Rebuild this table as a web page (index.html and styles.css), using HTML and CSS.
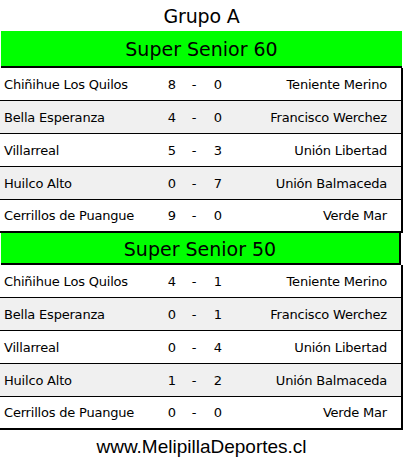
FILE: index.html
```html
<!DOCTYPE html>
<html lang="es">
<head>
<meta charset="utf-8">
<title>Grupo A</title>
<link rel="stylesheet" href="styles.css">
</head>
<body>
<div class="page">
  <h1 class="title">Grupo A</h1>

  <section class="group first">
    <h2 class="cat">Super Senior 60</h2>
    <div class="rows">
      <div class="row"><span class="home">Chiñihue Los Quilos</span><span class="s">8</span><span class="d">-</span><span class="s">0</span><span class="away">Teniente Merino</span></div>
      <div class="row alt"><span class="home">Bella Esperanza</span><span class="s">4</span><span class="d">-</span><span class="s">0</span><span class="away">Francisco Werchez</span></div>
      <div class="row"><span class="home">Villarreal</span><span class="s">5</span><span class="d">-</span><span class="s">3</span><span class="away">Unión Libertad</span></div>
      <div class="row alt"><span class="home">Huilco Alto</span><span class="s">0</span><span class="d">-</span><span class="s">7</span><span class="away">Unión Balmaceda</span></div>
      <div class="row last"><span class="home">Cerrillos de Puangue</span><span class="s">9</span><span class="d">-</span><span class="s">0</span><span class="away">Verde Mar</span></div>
    </div>
  </section>

  <section class="group second">
    <h2 class="cat">Super Senior 50</h2>
    <div class="rows">
      <div class="row"><span class="home">Chiñihue Los Quilos</span><span class="s">4</span><span class="d">-</span><span class="s">1</span><span class="away">Teniente Merino</span></div>
      <div class="row alt"><span class="home">Bella Esperanza</span><span class="s">0</span><span class="d">-</span><span class="s">1</span><span class="away">Francisco Werchez</span></div>
      <div class="row"><span class="home">Villarreal</span><span class="s">0</span><span class="d">-</span><span class="s">4</span><span class="away">Unión Libertad</span></div>
      <div class="row alt"><span class="home">Huilco Alto</span><span class="s">1</span><span class="d">-</span><span class="s">2</span><span class="away">Unión Balmaceda</span></div>
      <div class="row last"><span class="home">Cerrillos de Puangue</span><span class="s">0</span><span class="d">-</span><span class="s">0</span><span class="away">Verde Mar</span></div>
    </div>
  </section>

  <p class="site">www.MelipillaDeportes.cl</p>
</div>
</body>
</html>
```

FILE: styles.css
```css
html, body {
  margin: 0;
  padding: 0;
  background: #ffffff;
}

.page {
  width: 403px;
  font-family: "DejaVu Sans", Verdana, sans-serif;
  color: #000;
}

.title {
  margin: 0;
  height: 31px;
  display: flex;
  align-items: center;
  justify-content: center;
  font-size: 19px;
  letter-spacing: -0.2px;
  font-weight: normal;
  padding-top: 1px;
  box-sizing: border-box;
}

.cat {
  margin: 0 0 0 1px;
  background: #00ff00;
  font-size: 19px;
  font-weight: normal;
  display: flex;
  align-items: center;
  justify-content: center;
  border-bottom: 2px solid #000;
}

.first .cat {
  height: 37px;
  width: 401px;
  box-sizing: border-box;
  padding-top: 1px;
}

.second .cat {
  height: 32px;
  width: 400px;
  box-sizing: border-box;
  border-right: 2px solid #000;
  padding-top: 1px;
}

.rows {
  width: 403px;
  box-sizing: border-box;
  border-right: 2px solid #000;
}

.row {
  display: grid;
  grid-template-columns: 160px 24px 20px 28px 1fr;
  align-items: center;
  height: 33px;
  box-sizing: border-box;
  border-bottom: 1px solid #000;
  font-size: 13px;
  letter-spacing: -0.2px;
}

.row.alt {
  background: #f0f0f0;
}

.row.last {
  border-bottom-width: 2px;
}

.home {
  padding-left: 4px;
  white-space: nowrap;
}

.s, .d {
  text-align: center;
  letter-spacing: 0;
}

.away {
  text-align: right;
  padding-right: 14px;
  white-space: nowrap;
}

.site {
  margin: 0;
  height: 33px;
  display: flex;
  align-items: center;
  justify-content: center;
  font-family: "Liberation Sans", Arial, sans-serif;
  font-size: 19px;
}
```
